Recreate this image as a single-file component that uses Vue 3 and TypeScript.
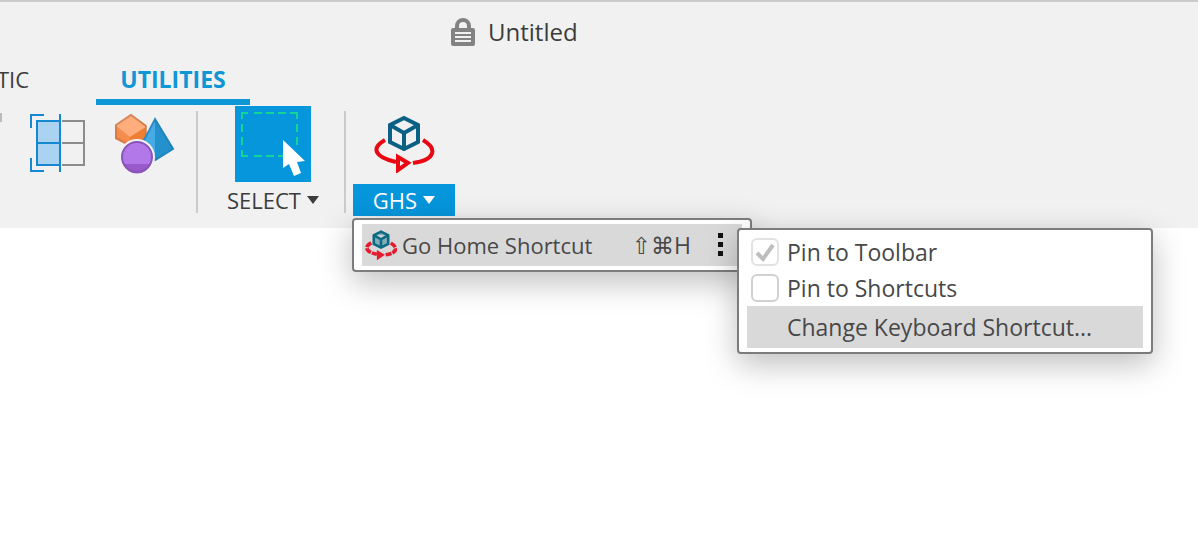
<script setup lang="ts">
import { ref } from 'vue'

const pinToolbar = ref(true)
const pinShortcuts = ref(false)
</script>

<template>
  <div class="app">
    <header class="header">
      <div class="title">
        <svg class="lock" width="26" height="28" viewBox="0 0 26 28" aria-hidden="true">
          <path d="M7 12V8a6 6 0 0 1 12 0v4" fill="none" stroke="#828282" stroke-width="4" />
          <rect x="1" y="10" width="24" height="18" rx="2" fill="#828282" />
          <path d="M5 15H21M5 19H21M5 23H21" stroke="#f1f1f1" stroke-width="2" />
        </svg>
        <span>Untitled</span>
      </div>

      <nav class="tabs">
        <button type="button" class="tab clipped">TIC</button>
        <button type="button" class="tab active">UTILITIES</button>
      </nav>

      <div class="ribbon">
        <div class="tools">
          <span class="edge"></span>
          <button type="button" class="tool" aria-label="Section view">
            <svg width="56" height="60" viewBox="0 0 56 60">
              <rect x="7" y="8" width="22" height="44" fill="#a9d3f1" />
              <path d="M32 8H54V52H32M32 30H54" fill="none" stroke="#8c8c8c" stroke-width="2" />
              <path d="M29 8H7V52H29M7 30H29" fill="none" stroke="#1687d2" stroke-width="2" />
              <path d="M14 2H1V15M1 45V58H14M30 1V59" fill="none" stroke="#1687d2" stroke-width="2" />
            </svg>
          </button>
          <button type="button" class="tool" aria-label="Shapes">
            <svg width="62" height="62" viewBox="0 0 62 62">
              <path d="M17 1L32 12V26L17 34L1 26V12Z" fill="#f58b4c" />
              <path d="M17 1L32 14L16 24L1 12Z" fill="#ffad7c" />
              <path d="M16 24L32 14V26L17 34Z" fill="#ee7f32" />
              <path d="M17 2L32 13V25L17 33L2 25V12Z" fill="none" stroke="#c87848" stroke-opacity="0.7" stroke-width="2" />
              <path d="M41 5L60 36L41 48L25 35Z" fill="#46aae5" />
              <path d="M41 5L60 36L41 48Z" fill="#2491cc" />
              <path d="M41 6L59 36L41 47L26 35Z" fill="none" stroke="#217eb5" stroke-opacity="0.7" stroke-width="2" />
              <circle cx="23" cy="44" r="18" fill="#f1f1f1" />
              <circle cx="23" cy="44" r="15" fill="#b277e9" />
              <path d="M9 51H37A15 15 0 0 1 9 51Z" fill="#9859cb" />
              <circle cx="23" cy="44" r="15" fill="none" stroke="#8a55b8" stroke-width="2" />
            </svg>
          </button>
        </div>
        <span class="divider"></span>
        <div class="group select">
          <button type="button" class="pick" aria-label="Select by window">
            <svg width="76" height="76" viewBox="0 0 76 76">
              <path d="M7 13V7H13M19 7H27M31 7H39M43 7H51M55 7H62V13M62 18V26M62 31V39M7 18V26M7 31V39M7 44V50H13M19 50H27M31 50H39M43 50H48" fill="none" stroke="#12d596" stroke-width="2" />
              <path d="M48 34L70 55L62 56L66 67L59 70L54 58L48 62Z" fill="#fff" />
            </svg>
          </button>
          <button type="button" class="caption">
            SELECT
            <svg width="12" height="8" viewBox="0 0 12 8"><path d="M0 0H12L6 8Z" fill="currentColor" /></svg>
          </button>
        </div>
        <span class="divider"></span>
        <div class="group ghs">
          <button type="button" class="orbit" aria-label="Go home">
            <svg width="62" height="58" viewBox="0 0 62 58">
              <path d="M31 3L45 10V27L31 34L17 27V10ZM17 10L31 18L45 10M31 18V34" fill="none" stroke="#0b6184" stroke-width="4" />
              <path d="M12 25C-2 33 1 42 23 47M50 25C65 34 62 45 40 48" fill="none" stroke="#e90713" stroke-width="4" />
              <path d="M25 42V55L35 48Z" fill="#f1f1f1" stroke="#e90713" stroke-width="4" />
            </svg>
          </button>
          <button type="button" class="caption open">
            GHS
            <svg width="12" height="8" viewBox="0 0 12 8"><path d="M0 0H12L6 8Z" fill="currentColor" /></svg>
          </button>

          <div class="menu main">
            <button type="button" class="item">
              <svg width="32" height="30" viewBox="0 0 62 58">
                <path d="M31 3L45 10V27L31 34L17 27V10ZM17 10L31 18L45 10M31 18V34" fill="#82acb8" stroke="#0b6b84" stroke-width="5" />
                <path d="M12 25C-2 33 1 42 23 47M50 25C65 34 62 45 40 48" fill="none" stroke="#e51c30" stroke-width="7" stroke-dasharray="12 2" />
                <path d="M25 42V55L35 48Z" fill="#e51c30" stroke="#e51c30" stroke-width="4" />
              </svg>
              <span class="name">Go Home Shortcut</span>
              <span class="keys"><span class="symbols">⇧⌘</span>H</span>
              <svg class="dots" width="6" height="24" viewBox="0 0 6 24">
                <path d="M0 0H5V5H0ZM0 9H5V14H0ZM0 18H5V23H0Z" fill="#111" />
              </svg>
            </button>
            <div class="menu sub">
              <label class="check">
                <input v-model="pinToolbar" type="checkbox" />
                <svg v-if="pinToolbar" class="tick" width="28" height="28" viewBox="0 0 28 28">
                  <path d="M6 15L12 21L22 7" fill="none" stroke="#bdbdbd" stroke-width="4" />
                </svg>
                <span>Pin to Toolbar</span>
              </label>
              <label class="check">
                <input v-model="pinShortcuts" type="checkbox" />
                <span>Pin to Shortcuts</span>
              </label>
              <button type="button" class="change">Change Keyboard Shortcut...</button>
            </div>
          </div>
        </div>
      </div>
    </header>
  </div>
</template>

<style>
body {
  background: #fff;
}
</style>

<style scoped>
.app {
  min-height: 100vh;
  font-family: "Open Sans", "Noto Sans", "DejaVu Sans", sans-serif;
  font-size: 22px;
  font-weight: 500;
  line-height: 30px;
  color: #3c3c3c;
}
button {
  margin: 0;
  padding: 0;
  border: 0;
  background: none;
  font: inherit;
  color: inherit;
}
svg {
  display: block;
  flex: none;
}
.header {
  border-top: 2px solid #cbcbcb;
  background: #f1f1f1;
}
.title {
  display: flex;
  align-items: center;
  gap: 12px;
  height: 60px;
  padding-left: 450px;
  font-size: 24px;
}
.tabs {
  display: flex;
  gap: 67px;
  height: 43px;
}
.tab {
  display: flex;
  justify-content: center;
  padding-top: 2px;
}
.tab.clipped {
  width: 29px;
  justify-content: flex-end;
}
.tab.active {
  width: 154px;
  border-bottom: 6px solid #0f96d4;
  color: #0f96d4;
  font-size: 23px;
  font-weight: 700;
}
.ribbon {
  display: flex;
  height: 123px;
}
.tools {
  display: flex;
  gap: 28px;
  width: 196px;
  padding-top: 8px;
  box-sizing: border-box;
  align-items: flex-start;
}
.edge {
  width: 2px;
  height: 9px;
  background: #bbb;
}
.divider {
  width: 2px;
  height: 102px;
  margin-top: 6px;
  background: #cbcbcb;
}
.group {
  display: flex;
  flex-direction: column;
  align-items: center;
  padding-top: 1px;
}
.select {
  width: 146px;
  padding-left: 4px;
  box-sizing: border-box;
}
.pick {
  background: #0696dc;
}
.caption {
  display: flex;
  align-items: center;
  justify-content: center;
  gap: 6px;
  width: 102px;
  height: 32px;
  margin-top: 2px;
}
.open {
  background: #0696dc;
  color: #fff;
}
.ghs {
  position: relative;
  width: 102px;
  margin-left: 7px;
}
.orbit {
  display: grid;
  place-items: center;
  height: 76px;
}
.menu {
  position: absolute;
  box-sizing: border-box;
  border: 2px solid #7c7c7c;
  border-radius: 4px;
  background: #fff;
  color: #484848;
  font-size: 23px;
  box-shadow: 0 10px 32px rgba(0, 0, 0, 0.26);
}
.main {
  top: 113px;
  left: -1px;
  width: 400px;
  padding: 4px 8px;
}
.item {
  display: flex;
  align-items: center;
  width: 100%;
  height: 42px;
  padding: 0 18px 0 3px;
  background: #d9d9d9;
}
.name {
  flex: 1;
  padding-left: 5px;
  font-size: 22px;
  text-align: left;
}
.keys {
  padding-right: 27px;
}
.symbols {
  font-family: "DejaVu Sans", sans-serif;
}
.sub {
  top: 8px;
  left: 383px;
  width: 416px;
  padding: 4px 8px;
}
.check {
  position: relative;
  display: flex;
  align-items: center;
  gap: 8px;
  height: 36px;
  padding-left: 4px;
}
.check input {
  appearance: none;
  width: 28px;
  height: 28px;
  margin: 0;
  border: 2px solid #d0d0d0;
  border-radius: 6px;
  background: #fff;
}
.check input:checked {
  border-color: #e2e2e2;
}
.tick {
  position: absolute;
  left: 4px;
  top: 4px;
}
.change {
  width: 100%;
  height: 42px;
  padding-left: 40px;
  background: #d9d9d9;
  text-align: left;
}
</style>
